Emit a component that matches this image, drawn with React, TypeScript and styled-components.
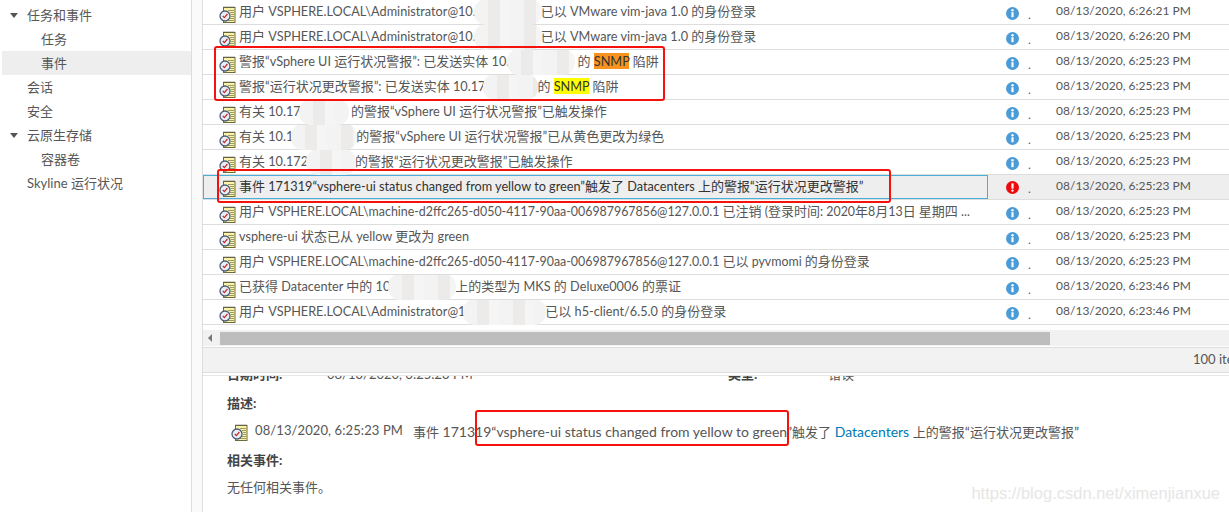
import React from "react";
import styled, { createGlobalStyle } from "styled-components";

const Global = createGlobalStyle`
  html, body { margin: 0; padding: 0; background: #fff; overflow: hidden; }
  body { font-family: "Lato", "Noto Sans CJK SC", sans-serif; font-size: 13px; color: #565656; }
`;
const Page = styled.div`position: relative; display: flex; width: 1229px; height: 512px; overflow: hidden; background: #fff;`;
const Sidebar = styled.nav`width: 192px; padding-top: 3px; box-sizing: border-box; border-right: 1px solid #ddd; flex: none;`;
const NavRow = styled.div<{ $depth: number; $active?: boolean }>`
  position: relative; height: 24px; line-height: 24px; margin-left: 2px;
  padding-left: ${(p) => (p.$depth ? 39 : 25)}px;
  background: ${(p) => (p.$active ? "#eee" : "transparent")};
  color: #565656; font-size: 13px;
`;
const Caret = styled.i`position: absolute; left: 8px; top: 10px; border-left: 4.5px solid transparent; border-right: 4.5px solid transparent; border-top: 5px solid #555;`;
const Gutter = styled.div`width: 10px; flex: none; background: #fafafa; border-right: 1px solid #ddd;`;
const Main = styled.main`flex: 1; min-width: 0; display: flex; flex-direction: column;`;
const Table = styled.div`height: 330px; overflow: hidden; flex: none;`;
const Row = styled.div<{ $sel?: boolean }>`
  display: grid; grid-template-columns: 785px 40px 28px 1fr; height: 25px; box-sizing: border-box;
  border-bottom: 1px solid #ddd; background: ${(p) => (p.$sel ? "#eee" : "#fff")}; align-items: center;
`;
const MsgCell = styled.div<{ $sel?: boolean }>`
  display: flex; align-items: center; height: 25px; box-sizing: border-box; padding-left: 16px; white-space: nowrap; overflow: hidden;
  color: ${(p) => (p.$sel ? "#333" : "#565656")};
  ${(p) => p.$sel && "outline: 1px solid #49afd9; outline-offset: -1px; height: 24px;"}
`;
const Msg = styled.span`margin-left: 3px; position: relative; top: -2px;`;
const Lat = styled.span<{ $s: number }>`font-size: ${(p) => p.$s}px;`;
const NoteSvg = styled.svg`flex: none; position: relative; top: 2px;`;
const Level = styled.div`display: flex; padding: 1px 0 0 18px;`;
const Dot = styled.div`padding-top: 3px; font-size: 12px; color: #555;`;
const When = styled.div`color: #565656; font-size: 12px; letter-spacing: 0.02px; white-space: nowrap; position: relative; top: -2px;`;
const Mark = styled.span<{ $bg: string }>`background: ${(p) => p.$bg}; color: #333;`;
const Hidden = styled.span<{ $w: number; $h?: number }>`
  display: inline-block; position: relative; width: ${(p) => p.$w}px; height: 10px;
  &::after {
    content: ""; position: absolute; left: -2px; right: -1px; top: -7px; height: ${(p) => p.$h ?? 26}px;
    border-radius: 12px;
    background: repeating-linear-gradient(90deg, #f3f3f3 0 14px, #ecebea 14px 26px, #f5f5f5 26px 36px);
  }
`;
const ScrollBar = styled.div`height: 16px; background: #f1f1f1; display: flex; align-items: center; padding: 1px 0; box-sizing: border-box; flex: none;`;
const ArrowLeft = styled.i`width: 17px; flex: none; position: relative; &::after { content: ""; position: absolute; left: 5px; top: -4px; border-top: 4px solid transparent; border-bottom: 4px solid transparent; border-right: 4px solid #777; }`;
const Thumb = styled.div`width: 830px; height: 13px; background: #bdbdbd;`;
const Footer = styled.div`
  height: 26px; flex: none; box-sizing: border-box; background: #f2f2f2; border-top: 1px solid #ddd; border-bottom: 1px solid #ddd;
  line-height: 23px; white-space: nowrap; overflow: hidden; padding-left: 990px; margin-top: 1px; font-size: 13px; color: #565656;
`;
const Details = styled.section`flex: 1; position: relative; overflow: hidden; padding-left: 24px; border-top: 1px solid #e6e6e6; margin-top: 2px;`;
const Clip = styled.div`display: flex; height: 7px; overflow: hidden; align-items: flex-end; line-height: 18px;`;
const ClipLabel = styled.b`width: 100px; flex: none; font-weight: 700; color: #444;`;
const ClipValue = styled.span`width: 401px; flex: none; position: relative;`;
const DetailLabel = styled.div<{ $top: number }>`font-weight: 700; color: #444; line-height: 20px; margin-top: ${(p) => p.$top}px;`;
const DetailLine = styled.div`display: flex; align-items: center; height: 36px; padding-left: 4px; white-space: nowrap; color: #565656;`;
const LineDate = styled.span`margin-left: 7px; margin-right: 10px; letter-spacing: 0.1px; position: relative; top: -1px;`;
const LineMsg = styled.span`white-space: pre;`;
const Link = styled.span`color: #0079b8;`;
const None = styled.div`line-height: 20px; margin-top: 7px;`;
const RedBox = styled.div<{ $x: number; $y: number; $w: number; $h: number }>`
  position: absolute; left: ${(p) => p.$x}px; top: ${(p) => p.$y}px; width: ${(p) => p.$w}px; height: ${(p) => p.$h}px;
  box-sizing: border-box; border: 2.5px solid #f5120c; border-radius: 3px; pointer-events: none;
`;
const Watermark = styled.div`position: absolute; right: 9px; bottom: 9px; font-family: "Liberation Sans", sans-serif; font-size: 16.5px; color: #e6e6e6;`;

/* Latin runs are set in a separate size from the CJK runs, as in the reference's font */
function mixed(node: React.ReactNode, size: number): React.ReactNode {
  return React.Children.map(node, (c) => {
    if (typeof c === "string") {
      return c.split(/([\x00-\x7f\u201c\u201d]+)/).map((s, i) =>
        i % 2 ? <Lat key={i} $s={size}>{s}</Lat> : s
      );
    }
    if (React.isValidElement(c) && c.type !== Hidden) {
      const el = c as React.ReactElement<{ children?: React.ReactNode }>;
      if (el.type === React.Fragment) return mixed(el.props.children, size);
      return React.cloneElement(el, undefined, mixed(el.props.children, size));
    }
    return c;
  });
}

const Note = () => (
  <NoteSvg width="17" height="18" viewBox="0 0 17 18">
    <rect x="4.5" y="1.5" width="11.5" height="15" fill="#fbf3a8" stroke="#6d6a3a" />
    <path d="M5 1.5v-1M7 1.5v-1M9 1.5v-1M11 1.5v-1M13 1.5v-1M15 1.5v-1" stroke="#555" />
    <path d="M9 4.5h6M11 6.5h4M12 8.5h3M12 10.5h3M10 12.5h5M7 14.5h8" stroke="#9a9a6a" />
    <circle cx="6" cy="10" r="5" fill="#e8eef6" stroke="#4b5d78" strokeWidth="1.3" />
    <path d="M3.8 10l1.6 1.7L8.4 8" fill="none" stroke="#c62828" strokeWidth="1.2" />
  </NoteSvg>
);
const Info = () => (
  <svg width="13" height="13" viewBox="0 0 13 13">
    <circle cx="6.5" cy="6.5" r="6.5" fill="#4a9bd6" />
    <circle cx="6.5" cy="3.2" r="1.2" fill="#fff" />
    <rect x="5.4" y="5.2" width="2.2" height="5" fill="#fff" />
  </svg>
);
const Err = () => (
  <svg width="13" height="13" viewBox="0 0 13 13">
    <circle cx="6.5" cy="6.5" r="6.5" fill="#ee0a0a" />
    <rect x="5.4" y="2.4" width="2.2" height="5.2" fill="#fff" />
    <circle cx="6.5" cy="9.6" r="1.2" fill="#fff" />
  </svg>
);

type R = { m: React.ReactNode; t: string; sel?: boolean; s?: number };
const rows: R[] = [
  { t: "08/13/2020, 6:26:21 PM", m: <>用户 VSPHERE.LOCAL\Administrator@10.<Hidden $w={65} />已以 VMware vim-java 1.0 的身份登录</> },
  { t: "08/13/2020, 6:26:20 PM", m: <>用户 VSPHERE.LOCAL\Administrator@10.<Hidden $w={65} />已以 VMware vim-java 1.0 的身份登录</> },
  { t: "08/13/2020, 6:25:23 PM", m: <>警报“vSphere UI 运行状况警报”: 已发送实体 10.<Hidden $w={65} /> 的 <Mark $bg="#f7931e">SNMP</Mark> 陷阱</> },
  { t: "08/13/2020, 6:25:23 PM", m: <>警报“运行状况更改警报”: 已发送实体 10.17<Hidden $w={52} />的 <Mark $bg="#ffff00">SNMP</Mark> 陷阱</> },
  { t: "08/13/2020, 6:25:23 PM", m: <>有关 10.17<Hidden $w={47} /> 的警报“vSphere UI 运行状况警报”已触发操作</> },
  { t: "08/13/2020, 6:25:23 PM", m: <>有关 10.1<Hidden $w={63} />的警报“vSphere UI 运行状况警报”已从黄色更改为绿色</> },
  { t: "08/13/2020, 6:25:23 PM", m: <>有关 10.172<Hidden $w={47} />的警报“运行状况更改警报”已触发操作</> },
  { sel: true, t: "08/13/2020, 6:25:23 PM", m: <>事件 171319“vsphere-ui status changed from yellow to green”触发了 Datacenters 上的警报“运行状况更改警报”</> },
  { s: 12.4, t: "08/13/2020, 6:25:23 PM", m: <>用户 VSPHERE.LOCAL\machine-d2ffc265-d050-4117-90aa-006987967856@127.0.0.1 已注销 (登录时间: 2020年8月13日 星期四 ...</> },
  { t: "08/13/2020, 6:25:23 PM", m: <>vsphere-ui 状态已从 yellow 更改为 green</> },
  { s: 12.4, t: "08/13/2020, 6:25:23 PM", m: <>用户 VSPHERE.LOCAL\machine-d2ffc265-d050-4117-90aa-006987967856@127.0.0.1 已以 pyvmomi 的身份登录</> },
  { t: "08/13/2020, 6:23:46 PM", m: <>已获得 Datacenter 中的 10<Hidden $w={65} />上的类型为 MKS 的 Deluxe0006 的票证</> },
  { t: "08/13/2020, 6:23:46 PM", m: <>用户 VSPHERE.LOCAL\Administrator@1<Hidden $w={80} />已以 h5-client/6.5.0 的身份登录</> },
  { t: "", m: "" },
];

export default function App() {
  return (
    <Page>
      <Global />
      <Sidebar>
        <NavRow $depth={0}><Caret />任务和事件</NavRow>
        <NavRow $depth={1}>任务</NavRow>
        <NavRow $depth={1} $active>事件</NavRow>
        <NavRow $depth={0}>会话</NavRow>
        <NavRow $depth={0}>安全</NavRow>
        <NavRow $depth={0}><Caret />云原生存储</NavRow>
        <NavRow $depth={1}>容器卷</NavRow>
        <NavRow $depth={0}>Skyline 运行状况</NavRow>
      </Sidebar>
      <Gutter />
      <Main>
        <Table>
          {rows.map((r, i) => (
            <Row key={i} $sel={r.sel}>
              <MsgCell $sel={r.sel}>
                {r.t && <Note />}
                <Msg>{mixed(r.m, r.s ?? 12.7)}</Msg>
              </MsgCell>
              <Level>{r.t && (r.sel ? <Err /> : <Info />)}</Level>
              <Dot>{r.t && "."}</Dot>
              <When>{r.t}</When>
            </Row>
          ))}
        </Table>
        <ScrollBar><ArrowLeft /><Thumb /></ScrollBar>
        <Footer>100 items</Footer>
        <Details>
          <Clip>
            <ClipLabel>日期时间:</ClipLabel>
            <ClipValue>08/13/2020, 6:25:23 PM</ClipValue>
            <ClipLabel>类型:</ClipLabel>
            <span>错误</span>
          </Clip>
          <DetailLabel $top={10}>描述:</DetailLabel>
          <DetailLine>
            <Note />
            <LineDate>08/13/2020, 6:25:23 PM</LineDate>
            <LineMsg>{mixed(<>事件 171319“vsphere-ui status changed from yellow to green”触发了 <Link>Datacenters</Link> 上的警报“运行状况更改警报”</>, 14)}</LineMsg>
          </DetailLine>
          <DetailLabel $top={1}>相关事件:</DetailLabel>
          <None>无任何相关事件。</None>
        </Details>
      </Main>
      <RedBox $x={214} $y={46} $w={451} $h={55} />
      <RedBox $x={217} $y={169} $w={674} $h={34} />
      <RedBox $x={475} $y={410} $w={314} $h={36} />
      <Watermark>https://blog.csdn.net/ximenjianxue</Watermark>
    </Page>
  );
}
